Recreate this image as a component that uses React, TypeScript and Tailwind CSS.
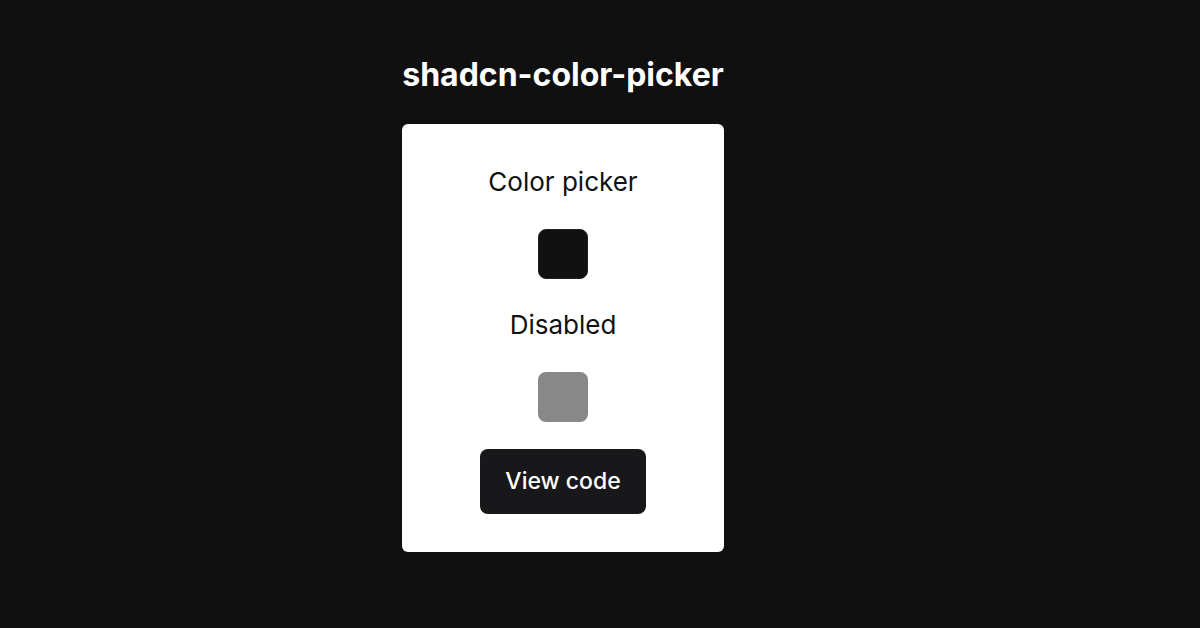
import React from 'react';

const App: React.FC = () => {
  return (
    <div
      className="w-full h-[628px] bg-[#101010] overflow-hidden"
      style={{ fontFamily: 'Inter, "Noto Sans", sans-serif' }}
    >
      <div className="ml-[402px] w-[322px] pt-[53px] flex flex-col items-center">
        <h1 className="text-[32px] leading-[44px] font-bold text-white">shadcn-color-picker</h1>

        <div className="mt-[27px] w-full h-[428px] bg-white rounded-md flex flex-col items-center">
          <div className="pt-[42px] flex flex-col items-center">
            <p className="text-[26px] leading-[32px] text-[#111]">Color picker</p>
            <button className="mt-[31px] w-[50px] h-[50px] rounded-lg bg-[#111111] border border-[#222]" />
            <p className="mt-[30px] text-[26px] leading-[32px] text-[#111]">Disabled</p>
            <button disabled className="mt-[31px] w-[50px] h-[50px] rounded-lg bg-[#888888]" />
            <button className="mt-[27px] w-[166px] h-[65px] rounded-lg bg-[#18181b] text-white text-[23px] font-medium">
              View code
            </button>
          </div>
        </div>
      </div>
    </div>
  );
};

export default App;
